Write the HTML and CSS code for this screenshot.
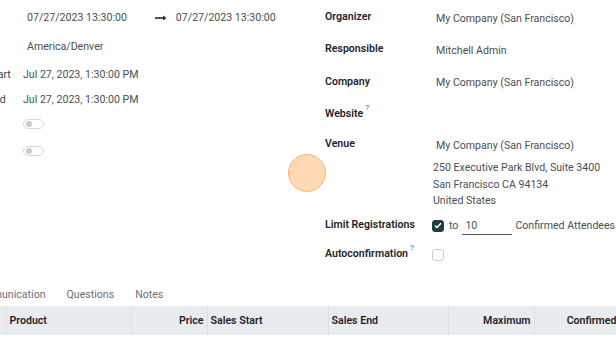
FILE: index.html
```html
<!DOCTYPE html>
<html>
<head>
<meta charset="utf-8">
<link rel="stylesheet" href="styles.css">
</head>
<body>
<div class="sheet">
  <div class="groups">
    <div class="group group-left">
      <div class="l-row row-date">
        <div class="l-label">Date</div>
        <div class="l-value date-range">
          <span class="date-input">07/27/2023 13:30:00</span>
          <svg class="arrow" width="12" height="6" viewBox="0 0 12 6"><path d="M0 3h8.5" stroke="#1f2937" stroke-width="1.6"/><path d="M8 0.5L11.5 3L8 5.5z" fill="#1f2937"/></svg>
          <span class="date-input">07/27/2023 13:30:00</span>
        </div>
      </div>
      <div class="l-row row-tz">
        <div class="l-label">Timezone</div>
        <div class="l-value tz">America/Denver</div>
      </div>
      <div class="l-row row-start">
        <div class="l-label">Start</div>
        <div class="l-value">Jul 27, 2023, 1:30:00 PM</div>
      </div>
      <div class="l-row row-end">
        <div class="l-label">End</div>
        <div class="l-value">Jul 27, 2023, 1:30:00 PM</div>
      </div>
      <div class="l-row row-t1">
        <div class="l-label">Published</div>
        <div class="l-value"><span class="toggle"><span class="knob"></span></span></div>
      </div>
      <div class="l-row row-t2">
        <div class="l-label">Online</div>
        <div class="l-value"><span class="toggle"><span class="knob"></span></span></div>
      </div>
    </div>
    <div class="group group-right">
      <div class="r-row">
        <div class="r-label">Organizer</div>
        <div class="r-value">My Company (San Francisco)</div>
      </div>
      <div class="r-row">
        <div class="r-label">Responsible</div>
        <div class="r-value">Mitchell Admin</div>
      </div>
      <div class="r-row row-company">
        <div class="r-label">Company</div>
        <div class="r-value">My Company (San Francisco)</div>
      </div>
      <div class="r-row row-website">
        <div class="r-label">Website<sup class="help">?</sup></div>
        <div class="r-value"></div>
      </div>
      <div class="r-row venue-row">
        <div class="r-label venue-label">Venue</div>
        <div class="r-value venue-value">
          <div>My Company (San Francisco)</div>
          <div class="address">
            <div>250 Executive Park Blvd, Suite 3400</div>
            <div>San Francisco CA 94134</div>
            <div>United States</div>
          </div>
        </div>
      </div>
      <div class="r-row">
        <div class="r-label">Limit Registrations</div>
        <div class="r-value limit">
          <span class="check checked"><svg width="8" height="7" viewBox="0 0 8 7"><path d="M1 3.6L3 5.5L7 1.3" fill="none" stroke="#fff" stroke-width="1.5"/></svg></span>
          <span class="to">to</span>
          <span class="num-input">10</span>
          <span class="unit">Confirmed Attendees</span>
        </div>
      </div>
      <div class="r-row auto-row">
        <div class="r-label">Autoconfirmation<sup class="help">?</sup></div>
        <div class="r-value limit"><span class="check"></span></div>
      </div>
    </div>
  </div>

  <div class="notebook">
    <ul class="tabs">
      <li class="tab">Communication</li>
      <li class="tab">Questions</li>
      <li class="tab">Notes</li>
    </ul>
    <table class="tickets">
      <colgroup>
        <col class="c-sel"><col class="c-product"><col class="c-price"><col class="c-start"><col class="c-end"><col class="c-max"><col class="c-conf"><col class="c-rest">
      </colgroup>
      <thead>
        <tr>
          <th></th>
          <th>Product</th>
          <th class="num">Price</th>
          <th>Sales Start</th>
          <th>Sales End</th>
          <th class="num">Maximum</th>
          <th class="num">Confirmed</th>
          <th></th>
        </tr>
      </thead>
    </table>
  </div>
</div>
<div class="pointer"></div>
</body>
</html>
```

FILE: styles.css
```css
html, body {
  margin: 0;
  padding: 0;
  background: #ffffff;
}
body {
  width: 616px;
  height: 347px;
  overflow: hidden;
  position: relative;
  font-family: "Roboto", "Liberation Sans", sans-serif;
  font-size: 10.6px;
  line-height: 16px;
  color: #4a4f56;
}
.sheet {
  margin-left: -40px;
  width: 760px;
}
.groups {
  display: grid;
  grid-template-columns: 350px 1fr;
  column-gap: 15px;
  height: 266px;
}
/* left group */
.group-left {
  padding-left: 28px;
  padding-top: 1px;
}
.l-row {
  display: flex;
  align-items: center;
}
.l-label {
  width: 35px;
  flex: none;
  color: #374151;
  white-space: nowrap;
  overflow: hidden;
}
.l-value {
  white-space: nowrap;
}
.row-date { height: 34px; }
.row-tz { height: 24px; }
.row-start { height: 32px; }
.row-end { height: 18px; }
.row-t1 { height: 30px; }
.row-t2 { height: 24px; }
.row-date .l-label, .row-tz .l-label, .row-t1 .l-label, .row-t2 .l-label {
  visibility: hidden;
}
.date-range {
  display: flex;
  align-items: center;
  padding-left: 4px;
}
.arrow {
  margin: 0 9px 0 28px;
}
.tz {
  padding-left: 4px;
}
.toggle {
  display: block;
  width: 19px;
  height: 8px;
  border: 1px solid #d4d7db;
  border-radius: 5px;
  position: relative;
  background: #fff;
}
.knob {
  position: absolute;
  left: 2px;
  top: 1px;
  width: 6px;
  height: 6px;
  border-radius: 50%;
  background: #c9cbce;
}
/* right group */
.group-right {
  padding-top: 1px;
}
.r-row {
  display: flex;
  align-items: center;
  height: 32px;
}
.row-company {
  height: 33px;
}
.r-label {
  width: 111px;
  flex: none;
  color: #1f2328;
  font-weight: 600;
  white-space: nowrap;
}
.r-value {
  padding-top: 3px;
  white-space: nowrap;
}
.help {
  color: #6aa8c4;
  font-size: 8px;
  font-weight: 700;
  vertical-align: top;
  line-height: 8px;
  margin-left: 2px;
  position: relative;
  top: -2px;
}
.venue-row {
  align-items: flex-start;
  height: 79px;
}
.venue-label {
  padding-top: 6px;
}
.venue-value {
  padding-top: 8px;
}
.address {
  margin-top: 6px;
  margin-left: -3px;
  line-height: 16.5px;
}
.auto-row {
  height: 26px;
}
.limit {
  display: flex;
  align-items: center;
  margin-left: -4px;
  padding-top: 1px;
}
.check {
  display: flex;
  align-items: center;
  justify-content: center;
  width: 10px;
  height: 10px;
  border: 1px solid #c9cdd2;
  border-radius: 3px;
  background: #fff;
}
.check.checked {
  background: #1f3d45;
  border-color: #1f3d45;
}
.to {
  margin-left: 5px;
}
.num-input {
  width: 47px;
  margin-left: 4px;
  padding-left: 3px;
  border-bottom: 1px solid #4b5563;
  line-height: 17px;
}
.unit {
  margin-left: 3px;
}
/* notebook */
.notebook {
  margin-top: 13px;
}
.tabs {
  list-style: none;
  margin: 0;
  padding: 0;
  display: flex;
}
.tab {
  padding: 8px 10.5px 3px;
  color: #6b6e7a;
}
.tickets {
  border-collapse: collapse;
  table-layout: fixed;
  width: 720px;
}
.c-sel { width: 46px; }
.c-product { width: 125px; }
.c-price { width: 76px; }
.c-start { width: 121px; }
.c-end { width: 120px; }
.c-max { width: 86px; }
.c-conf { width: 86px; }
.c-rest { width: 60px; }
.tickets th {
  background: #e9ecef;
  height: 29px;
  padding: 0 3px;
  text-align: left;
  font-weight: 600;
  color: #1f2328;
  border-left: 1px solid #dcdfe3;
  white-space: nowrap;
}
.tickets th:first-child {
  border-left: none;
}
.tickets th.num {
  text-align: right;
}
.pointer {
  position: absolute;
  left: 288px;
  top: 154px;
  width: 36px;
  height: 36px;
  border-radius: 50%;
  background: #ffd8b4;
  border: 1.5px solid #ffb46e;
}
```
